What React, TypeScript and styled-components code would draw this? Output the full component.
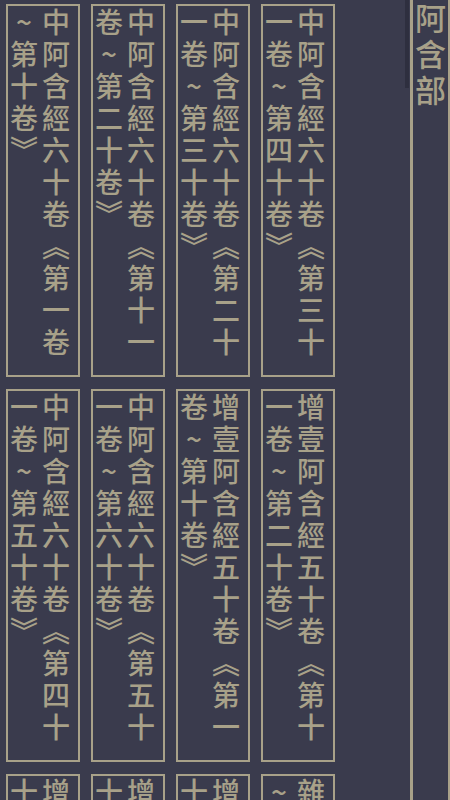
import styled, { createGlobalStyle } from 'styled-components';

const ink = '#a8a189';
const paper = '#3a3b4d';

const GlobalStyle = createGlobalStyle`
    html, body {
        margin: 0;
        padding: 0;
        height: 100%;
        background: ${paper};
        overflow: hidden;
    }
    #root {
        height: 100%;
    }
`;

const books = [
    '中阿含經六十卷《第三十一卷~第四十卷》',
    '中阿含經六十卷《第二十一卷~第三十卷》',
    '中阿含經六十卷《第十一卷~第二十卷》',
    '中阿含經六十卷《第一卷~第十卷》',
    '增壹阿含經五十卷《第十一卷~第二十卷》',
    '增壹阿含經五十卷《第一卷~第十卷》',
    '中阿含經六十卷《第五十一卷~第六十卷》',
    '中阿含經六十卷《第四十一卷~第五十卷》',
    '雜阿含經五十卷《第一卷~第十卷》',
    '增壹阿含經五十卷《第四十一卷~第五十卷》',
    '增壹阿含經五十卷《第三十一卷~第四十卷》',
    '增壹阿含經五十卷《第二十一卷~第三十卷》',
];

export default function App() {
    return (
        <>
            <GlobalStyle />
            <Page>
                <Shelf>
                    <ScrollThumb />
                    <Grid>
                        {books.map((title) => (
                            <Book key={title}>
                                <BookTitle>{title}</BookTitle>
                            </Book>
                        ))}
                    </Grid>
                </Shelf>
                <SectionHeader>
                    <SectionTitle>阿含部</SectionTitle>
                </SectionHeader>
            </Page>
        </>
    );
}

const Page = styled.div`
    display: flex;
    height: 800px;
    background: ${paper};
    font-family: "Noto Sans CJK TC", "Noto Sans CJK SC", sans-serif;
    color: ${ink};
`;

const Shelf = styled.div`
    position: relative;
    flex: 1;
    padding: 4px 0 0 6px;
    overflow: hidden;
`;

const ScrollThumb = styled.div`
    position: absolute;
    top: 0;
    right: 1px;
    width: 4px;
    height: 88px;
    background: #2e2f3f;
`;

const Grid = styled.div`
    display: grid;
    width: 329px;
    grid-template-columns: repeat(4, 74px);
    grid-auto-rows: 373px;
    column-gap: 11px;
    row-gap: 12px;
    direction: rtl;
`;

const Book = styled.div`
    box-sizing: border-box;
    border: 2px solid ${ink};
    padding: 2px 0 0 0;
    direction: ltr;
    overflow: hidden;
`;

const BookTitle = styled.div`
    writing-mode: vertical-rl;
    text-orientation: upright;
    height: 100%;
    font-size: 28px;
    font-weight: 500;
    line-height: 32px;
    letter-spacing: 4px;
`;

const SectionHeader = styled.div`
    width: 35px;
    border-left: 3px solid ${ink};
    border-right: 2px solid ${ink};
    display: flex;
    justify-content: center;
`;

const SectionTitle = styled.h1`
    margin: 0;
    padding-top: 3px;
    writing-mode: vertical-rl;
    font-size: 31px;
    font-weight: 500;
    line-height: 35px;
    letter-spacing: 5px;
`;
